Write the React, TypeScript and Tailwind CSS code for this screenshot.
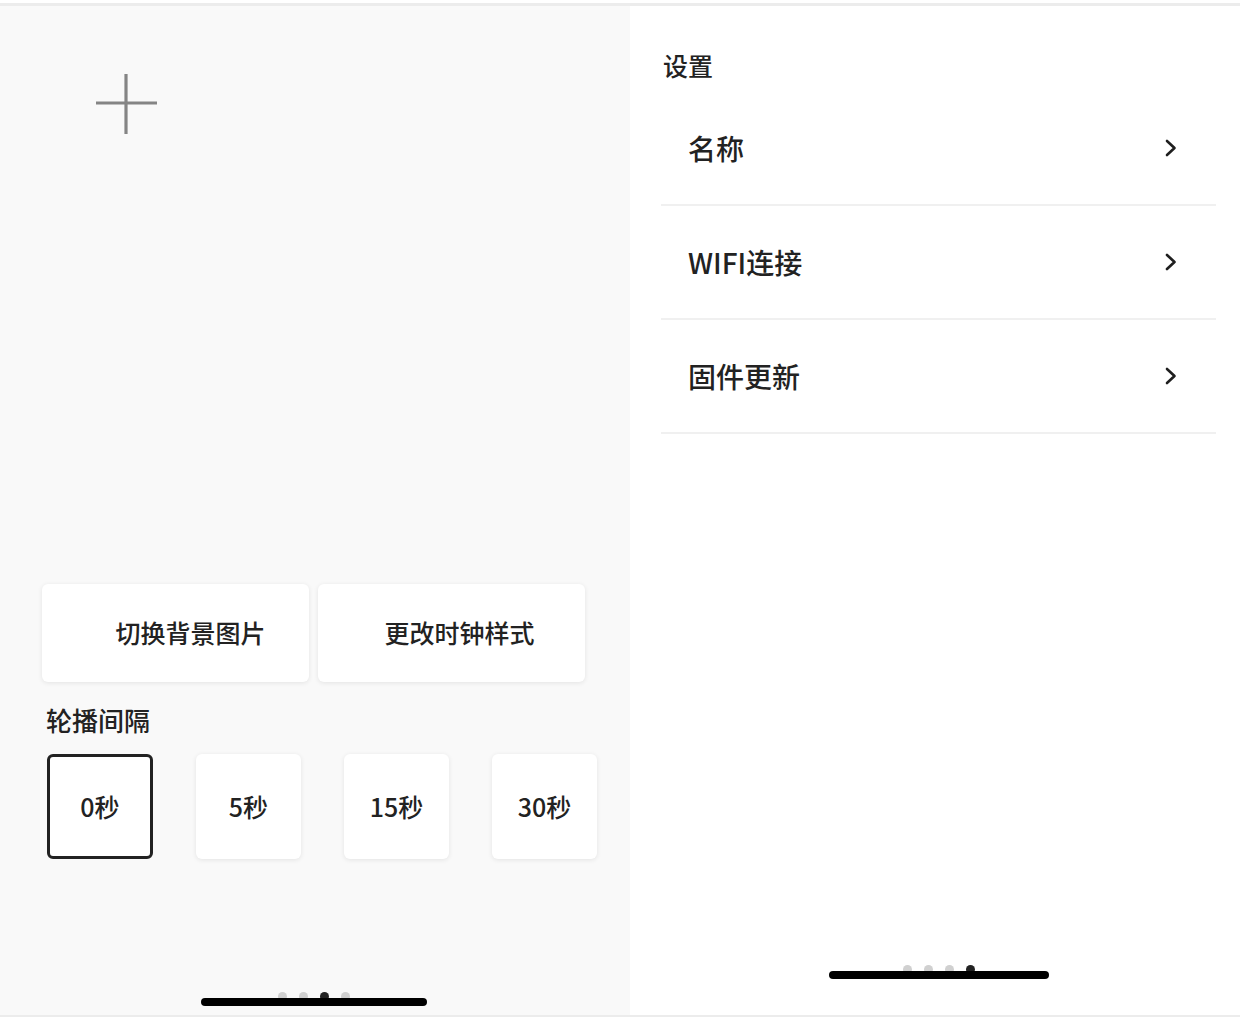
import React from "react";

const font = { fontFamily: '"Noto Sans CJK SC", "Noto Sans", sans-serif' };

function Chevron() {
  return (
    <svg width="14" height="20" viewBox="0 0 14 20" fill="none">
      <polyline points="3,3 10.5,10 3,17" stroke="#1f1f1f" strokeWidth="2.6" strokeLinecap="round" strokeLinejoin="round" />
    </svg>
  );
}

function HomeBar({ active, barW }: { active: number; barW: string }) {
  return (
    <div className="flex flex-col items-center">
      <div className="flex gap-[12px]">
        {[0, 1, 2, 3].map((i) => (
          <div
            key={i}
            className={i === active ? "w-[9px] h-[9px] rounded-full bg-[#222]" : "w-[9px] h-[9px] rounded-full bg-[#d0d0d0]"}
          />
        ))}
      </div>
      <div className={`${barW} h-[8px] -mt-[3px] rounded-full bg-black`} />
    </div>
  );
}

export default function App() {
  const intervals = ["0秒", "5秒", "15秒", "30秒"];
  const rows = ["名称", "WIFI连接", "固件更新"];
  return (
    <div className="w-[1240px] h-[1018px] bg-white flex flex-col text-[#222]" style={font}>
      <div className="h-[3px] bg-white" />
      <div className="h-[3px] bg-[#ececec]" />
      <div className="flex flex-1">
        {/* Left panel */}
        <div className="w-[630px] bg-[#f9f9f9] flex flex-col">
          <div className="ml-[95px] mt-[67px]">
            <svg width="63" height="62" viewBox="0 0 63 62">
              <line x1="1" y1="30" x2="62" y2="30" stroke="#858585" strokeWidth="3.2" />
              <line x1="31" y1="1" x2="31" y2="61" stroke="#858585" strokeWidth="3.2" />
            </svg>
          </div>
          <div className="flex gap-[9px] ml-[42px] mt-[449px]">
            <div className="w-[267px] h-[98px] bg-white rounded-[6px] shadow-[0_1px_5px_rgba(0,0,0,0.09)] flex items-center justify-center pl-[30px] text-[25px] font-medium">
              切换背景图片
            </div>
            <div className="w-[267px] h-[98px] bg-white rounded-[6px] shadow-[0_1px_5px_rgba(0,0,0,0.09)] flex items-center justify-center pl-[16px] text-[25px] font-medium">
              更改时钟样式
            </div>
          </div>
          <div className="ml-[46px] mt-[20px] text-[26px] leading-[36px] font-medium">轮播间隔</div>
          <div className="flex gap-[43px] ml-[47px] mt-[16px]">
            {intervals.map((t, i) => (
              <div
                key={t}
                className={
                  i === 0
                    ? "w-[106px] h-[105px] bg-white rounded-[6px] border-[3px] border-[#222] flex items-center justify-center text-[25px] font-medium"
                    : "w-[105px] h-[105px] bg-white rounded-[6px] shadow-[0_1px_5px_rgba(0,0,0,0.09)] flex items-center justify-center text-[25px] font-medium"
                }
              >
                {t}
              </div>
            ))}
          </div>
          <div className="flex-1" />
          <div className="ml-[201px] w-[225px] mb-[9px]">
            <HomeBar active={2} barW="w-[226px]" />
          </div>
        </div>
        {/* Right panel */}
        <div className="flex-1 bg-white flex flex-col">
          <div className="h-[86px] flex items-center pl-[33px] pt-[34px] text-[25px] font-medium">设置</div>
          <div className="ml-[31px] w-[555px]">
            {rows.map((r) => (
              <div key={r} className="h-[114px] border-b-2 border-[#f0f0f0] flex items-center justify-between pl-[27px] pr-[38px]">
                <span className="text-[28px] font-medium">{r}</span>
                <Chevron />
              </div>
            ))}
          </div>
          <div className="flex-1" />
          <div className="ml-[199px] w-[220px] mb-[36px]">
            <HomeBar active={3} barW="w-[220px]" />
          </div>
        </div>
      </div>
      <div className="h-[2px] bg-[#ececec]" />
      <div className="h-[1px] bg-white" />
    </div>
  );
}
